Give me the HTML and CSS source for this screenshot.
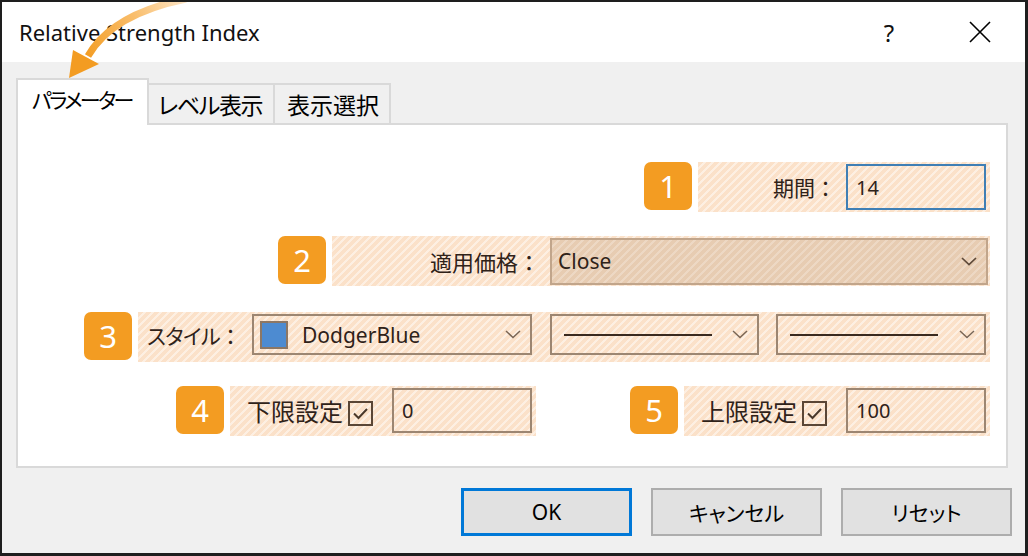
FILE: index.html
```html
<!DOCTYPE html>
<html lang="ja">
<head>
<meta charset="utf-8">
<title>Relative Strength Index</title>
<link rel="stylesheet" href="styles.css">
</head>
<body>
<div class="window">
  <svg class="arrow" width="200" height="90" viewBox="0 0 200 90">
    <defs>
      <linearGradient id="ag" gradientUnits="userSpaceOnUse" x1="184" y1="0" x2="86" y2="60">
        <stop offset="0" stop-color="#fde4c4"/>
        <stop offset="0.45" stop-color="#f9bd6a"/>
        <stop offset="1" stop-color="#f39c22"/>
      </linearGradient>
    </defs>
    <path d="M186 -1 Q112 14 88 56" fill="none" stroke="url(#ag)" stroke-width="7"/>
    <polygon points="69,78 73,50 99,64" fill="#f39c22"/>
  </svg>

  <div class="titlebar">
    <span class="title">Relative Strength Index</span>
    <span class="tb-help">?</span>
    <span class="tb-close">
      <svg width="22" height="22" viewBox="0 0 22 22"><path d="M1 1 L21 21 M21 1 L1 21" stroke="#000" stroke-width="1.6" fill="none"/></svg>
    </span>
  </div>

  <div class="body">
    <div class="tabs">
      <div class="tab tab-active">パラメーター</div>
      <div class="tab tab-2">レベル表示</div>
      <div class="tab tab-3">表示選択</div>
    </div>

    <div class="panel">
      <div class="row">
        <div class="badge">1</div>
        <div class="band band-1">
          <span class="label label-period">期間：</span>
          <div class="field field-focus">14</div>
        </div>
      </div>

      <div class="row">
        <div class="badge">2</div>
        <div class="band band-2">
          <span class="label label-price">適用価格：</span>
          <div class="combo combo-price">
            <span class="combo-text">Close</span>
            <svg class="chev" width="16" height="9" viewBox="0 0 16 9"><path d="M1 1 L8 7.5 L15 1" fill="none" stroke="#5e4a3a" stroke-width="1.7"/></svg>
          </div>
        </div>
      </div>

      <div class="row row-style">
        <div class="badge">3</div>
        <div class="band band-3">
          <span class="label label-style"><span class="kana">スタイル</span>：</span>
          <div class="combo combo-color">
            <span class="swatch"></span>
            <span class="combo-text">DodgerBlue</span>
            <svg class="chev" width="16" height="9" viewBox="0 0 16 9"><path d="M1 1 L8 7.5 L15 1" fill="none" stroke="#7a6655" stroke-width="1.5"/></svg>
          </div>
          <div class="combo combo-line">
            <span class="line-sample"></span>
            <svg class="chev" width="16" height="9" viewBox="0 0 16 9"><path d="M1 1 L8 7.5 L15 1" fill="none" stroke="#7a6655" stroke-width="1.5"/></svg>
          </div>
          <div class="combo combo-line combo-line-2">
            <span class="line-sample"></span>
            <svg class="chev" width="16" height="9" viewBox="0 0 16 9"><path d="M1 1 L8 7.5 L15 1" fill="none" stroke="#7a6655" stroke-width="1.5"/></svg>
          </div>
        </div>
      </div>

      <div class="row row-levels">
        <div class="group">
          <div class="badge">4</div>
          <div class="band band-4">
            <span class="label label-check">下限設定</span>
            <svg class="check" width="25" height="25" viewBox="0 0 25 25"><rect x="1" y="1" width="23" height="23" fill="none" stroke="#5a4636" stroke-width="2"/><path d="M6 12.5 L10.5 17 L19 8" fill="none" stroke="#4a382a" stroke-width="2"/></svg>
            <div class="field field-level">0</div>
          </div>
        </div>
        <div class="group">
          <div class="badge">5</div>
          <div class="band band-4">
            <span class="label label-check">上限設定</span>
            <svg class="check" width="25" height="25" viewBox="0 0 25 25"><rect x="1" y="1" width="23" height="23" fill="none" stroke="#5a4636" stroke-width="2"/><path d="M6 12.5 L10.5 17 L19 8" fill="none" stroke="#4a382a" stroke-width="2"/></svg>
            <div class="field field-level">100</div>
          </div>
        </div>
      </div>
    </div>

    <div class="buttons">
      <div class="btn btn-default">OK</div>
      <div class="btn">キャンセル</div>
      <div class="btn">リセット</div>
    </div>
  </div>
</div>
</body>
</html>
```

FILE: styles.css
```css
html, body {
  margin: 0;
  padding: 0;
  background: #1e1e1e;
}

.window {
  position: relative;
  width: 1028px;
  height: 556px;
  box-sizing: border-box;
  border-style: solid;
  border-color: #1e1e1e;
  border-width: 2px 3px 3px 2px;
  background: #f0f0f0;
  font-family: "Noto Sans", "Noto Sans CJK JP", sans-serif;
  color: #000;
  overflow: hidden;
}

.arrow {
  position: absolute;
  left: -2px;
  top: -2px;
  z-index: 5;
}

/* title bar */
.titlebar {
  height: 60px;
  background: #fff;
  display: flex;
  align-items: center;
  padding-left: 17px;
}

.title {
  font-size: 22px;
  flex: 1;
  color: #111;
}

.tb-help {
  width: 40px;
  text-align: center;
  font-size: 24px;
  font-family: "Noto Sans", sans-serif;
  color: #111;
  margin-right: 51px;
}

.tb-close {
  width: 40px;
  display: flex;
  justify-content: center;
  margin-right: 25px;
}

/* body */
.body {
  padding: 16px 17px 0 14px;
}

.tabs {
  display: flex;
  align-items: flex-start;
  height: 47px;
  margin-bottom: -2px;
}

.tab {
  box-sizing: border-box;
  border: 2px solid #d9d9d9;
  border-bottom: none;
  font-family: "Noto Sans CJK JP", sans-serif;
  font-feature-settings: "palt";
  font-size: 23px;
  white-space: nowrap;
  display: flex;
  align-items: center;
  color: #000;
}

.tab-active {
  position: relative;
  z-index: 1;
  width: 133px;
  height: 47px;
  background: #fff;
  padding: 0 0 8px 14px;
  font-size: 21px;
  letter-spacing: -2.6px;
}

.tab-2, .tab-3 {
  margin-top: 5px;
  height: 40px;
  border-left: none;
  background: #f0f0f0;
}

.tab-2 {
  width: 126px;
  padding-left: 9px;
  letter-spacing: -1.4px;
}

.tab-3 {
  width: 116px;
  padding-left: 12px;
}

.panel {
  height: 345px;
  box-sizing: border-box;
  border: 2px solid #d9d9d9;
  background: #fff;
  padding: 37px 16px 0 0;
  display: flex;
  flex-direction: column;
  gap: 24px;
}

.row {
  display: flex;
  justify-content: flex-end;
  align-items: flex-start;
  height: 50px;
}

.row-style {
  margin-top: 2px;
}

.row-levels {
  gap: 94px;
}

.group {
  display: flex;
  align-items: flex-start;
}

.badge {
  width: 48px;
  height: 48px;
  border-radius: 7px;
  background: #f39c22;
  color: #fff;
  font-family: "Noto Sans", sans-serif;
  font-size: 31px;
  line-height: 48px;
  text-align: center;
  margin-right: 6px;
}

.band {
  height: 50px;
  box-sizing: border-box;
  display: flex;
  align-items: center;
  justify-content: flex-end;
  padding-right: 4px;
  background: repeating-linear-gradient(135deg, #fbe1c9 0 3.8px, #fdefe2 3.8px 5.66px);
  color: #2f2219;
}

.band-1 { width: 292px; }
.band-2 { width: 658px; padding-right: 2px; }
.band-3 { width: 852px; align-items: flex-start; }
.band-4 { width: 306px; align-items: flex-start; }

.label {
  font-family: "Noto Sans CJK JP", sans-serif;
  font-size: 21px;
  margin-right: 10px;
  white-space: nowrap;
}

.label-period {
  font-size: 21px;
  margin-right: 10px;
}

.label-price {
  font-size: 22px;
  margin-right: 10px;
}

.label-style {
  font-size: 21px;
  align-self: center;
  margin-right: 11px;
  margin-top: -5px;
}

.kana {
  font-feature-settings: "palt";
  letter-spacing: -0.6px;
}

.label-check {
  font-size: 24px;
  margin: 7px 5px 0 0;
}

.check {
  margin-top: 15px;
  margin-right: 19px;
}

.field {
  box-sizing: border-box;
  width: 140px;
  border: 2px solid #9c8672;
  display: flex;
  align-items: center;
  padding-left: 8px;
  font-family: "Noto Sans", sans-serif;
  font-size: 20px;
}

.field-focus {
  height: 46px;
  border-color: #3f7fb5;
}

.field-level {
  height: 45px;
  margin-top: 2px;
}

.combo {
  box-sizing: border-box;
  display: flex;
  align-items: center;
  border: 2px solid #9c8672;
  font-family: "Noto Sans", sans-serif;
  font-size: 21px;
  padding: 0 9px 0 6px;
}

.combo .chev {
  margin-left: auto;
}

.combo-price {
  width: 438px;
  height: 47px;
  border-color: #c1a58b;
  background: repeating-linear-gradient(135deg, #e7ccb2 0 3.8px, #edd8c4 3.8px 5.66px);
  padding-left: 6px;
}

.combo-color {
  width: 280px;
  height: 41px;
  margin-top: 2px;
  margin-right: 18px;
}

.swatch {
  width: 28px;
  height: 28px;
  box-sizing: border-box;
  border: 2px solid #8c7765;
  background: #4d8bd1;
  margin-right: 14px;
}

.combo-line {
  width: 209px;
  height: 41px;
  margin-top: 2px;
  margin-right: 17px;
  padding-left: 12px;
}

.combo-line-2 {
  width: 210px;
  margin-right: 0;
}

.line-sample {
  width: 148px;
  height: 2px;
  background: #3a2a1f;
}

/* buttons */
.buttons {
  display: flex;
  justify-content: flex-end;
  gap: 19px;
  padding-top: 20px;
  margin-right: -4px;
}

.btn {
  width: 171px;
  height: 48px;
  box-sizing: border-box;
  border: 2px solid #adadad;
  background: #e1e1e1;
  display: flex;
  align-items: center;
  justify-content: center;
  font-family: "Noto Sans", "Noto Sans CJK JP", sans-serif;
  font-feature-settings: "palt";
  font-size: 21px;
}

.btn-default {
  border: 3px solid #0078d7;
}
```
